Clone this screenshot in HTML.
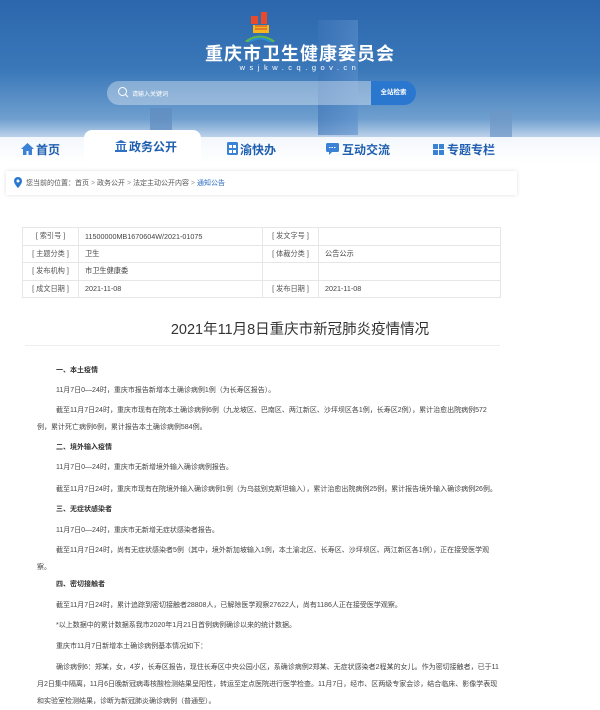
<!DOCTYPE html>
<html><head><meta charset="utf-8"><style>
*{margin:0;padding:0;box-sizing:border-box}
body{width:600px;height:704px;overflow:hidden;background:#fff;font-family:"Liberation Sans","Noto Sans CJK SC",sans-serif;position:relative}
.hdr{position:absolute;left:0;top:0;width:600px;height:140px;background:linear-gradient(180deg,#2c66ad 0%,#3a78b9 50%,#6f9fcf 85%,#c9daee 100%)}
.a{position:absolute}
.navbg{position:absolute;top:137px;left:0;width:600px;height:26px;background:linear-gradient(180deg,#f3f7fc,#fff)}
.nav{position:absolute;top:137px;left:0;width:600px;height:26px}
.nav div{position:absolute;top:4px;font-size:12px;font-weight:bold;color:#1f5fb0;white-space:nowrap}
.bc{position:absolute;left:6px;top:171px;width:511px;height:24px;background:#fff;box-shadow:0 0 4px rgba(0,0,0,.12);font-size:7px;color:#555;padding:7px 0 0 20px}
table{position:absolute;left:22px;top:227px;width:479px;border-collapse:collapse;font-size:7.2px;color:#444}
td{border:1px solid #e6e6e6;height:17.5px;padding-left:6px}
td.l{text-align:center;padding:0;color:#555}
.title{position:absolute;left:0;width:600px;top:318px;text-align:center;font-size:14.5px;color:#333}
.line{position:absolute;left:25px;top:345px;width:475px;height:1px;background:#eee}
.p{position:absolute;left:37px;width:462px;font-size:7px;color:#444;line-height:17px;text-indent:19px;white-space:normal}
.h{font-weight:bold;color:#333}
</style></head><body>
<div class="hdr"></div>
<div class="a" style="left:318px;top:20px;width:40px;height:115px;background:linear-gradient(90deg,#3d74b8,#5a8fcc);opacity:.6"></div>
<div class="a" style="left:150px;top:108px;width:22px;height:30px;background:#5f8bbf;opacity:.7"></div>
<div class="a" style="left:490px;top:110px;width:22px;height:28px;background:#6d97c6;opacity:.7"></div>
<svg class="a" style="left:243px;top:8px" width="34" height="34" viewBox="0 0 34 34"><path d="M8 8h7v8H8zM18 4h6v12h-6z" fill="#e94a2a"/><path d="M10 17h16v8H10z" fill="#f7b41c"/><path d="M12 18h12M12 21h12" stroke="#c43" stroke-width="1"/><path d="M3 34Q17 24 31 34" stroke="#5bb54a" stroke-width="3" fill="none"/><path d="M6 34Q17 27 28 34" stroke="#2a8fd6" stroke-width="2" fill="none"/></svg>
<div class="a" style="left:0;width:600px;top:45px;line-height:19px;text-align:center;font-size:18px;font-weight:bold;color:#fff;letter-spacing:1px">重庆市卫生健康委员会</div>
<div class="a" style="left:0;width:600px;top:64px;line-height:8px;text-align:center;font-size:7.5px;color:#fff;letter-spacing:4.5px">wsjkw.cq.gov.cn</div>
<div class="a" style="left:107px;top:81px;width:264px;height:24px;border-radius:12px 0 0 12px;background:rgba(255,255,255,.35)"></div>
<div class="a" style="left:371px;top:81px;width:45px;height:24px;border-radius:0 12px 12px 0;background:#2a77d0;color:#fff;font-size:6.5px;font-weight:bold;text-align:center;line-height:24px">全站检索</div>
<svg class="a" style="left:117px;top:86px" width="12" height="12"><circle cx="5.5" cy="5.5" r="4" stroke="#fff" stroke-width="1" fill="none"/><path d="M8.5 8.5L11 11" stroke="#fff"/></svg>
<div class="a" style="left:132px;top:89px;font-size:6px;color:#fff">请输入关键词</div>
<div class="navbg"></div>
<div class="a" style="left:84px;top:130px;width:117px;height:33px;background:#fff;border-radius:8px 8px 0 0"></div>
<div class="nav">
<svg class="a" style="left:21px;top:6px" width="13" height="12"><path d="M6.5 0L0 6h2v6h3.5V8h2v4H11V6h2z" fill="#3b82d6"/></svg>
<div style="left:36px">首页</div>
<svg class="a" style="left:115px;top:3px" width="12" height="12"><path d="M6 0L0 3h12zM1 4h10v1H1zM2 5h1.5v5H2zM5.2 5h1.5v5H5.2zM8.5 5H10v5H8.5zM0 10h12v2H0z" fill="#2f6fc4"/></svg>
<div style="left:129px;top:1px">政务公开</div>
<svg class="a" style="left:227px;top:5px" width="11" height="13"><rect width="11" height="13" rx="1.5" fill="#3b82d6"/><rect x="2" y="3" width="3" height="3" fill="#fff"/><rect x="6" y="3" width="3" height="3" fill="#fff"/><rect x="2" y="8" width="3" height="3" fill="#fff"/><rect x="6" y="8" width="3" height="3" fill="#fff"/></svg>
<div style="left:240px">渝快办</div>
<svg class="a" style="left:326px;top:6px" width="13" height="12"><rect width="13" height="9" rx="1.5" fill="#3b82d6"/><path d="M3 9l0 3 3-3z" fill="#3b82d6"/><path d="M3 4.5h7" stroke="#fff" stroke-dasharray="1.5 1"/></svg>
<div style="left:342px">互动交流</div>
<svg class="a" style="left:433px;top:7px" width="11" height="11"><rect width="5" height="5" fill="#3b82d6"/><rect x="6" width="5" height="5" fill="#3b82d6"/><rect y="6" width="5" height="5" fill="#3b82d6"/><rect x="6" y="6" width="5" height="5" fill="#3b82d6"/></svg>
<div style="left:447px">专题专栏</div>
</div>
<div class="bc"><svg class="a" style="left:8px;top:6px" width="8" height="12"><path d="M4 0A4 4 0 0 0 0 4c0 3 4 7 4 7s4-4 4-7a4 4 0 0 0-4-4z" fill="#2a77d0"/><circle cx="4" cy="4" r="1.5" fill="#fff"/></svg>您当前的位置：首页 <span style="color:#999">&gt;</span> 政务公开 <span style="color:#999">&gt;</span> 法定主动公开内容 <span style="color:#999">&gt;</span> <span style="color:#2a6bc0">通知公告</span></div>
<table>
<tr><td class="l" style="width:56px">[ 索引号 ]</td><td style="width:184px">11500000MB1670604W/2021-01075</td><td class="l" style="width:56px">[ 发文字号 ]</td><td></td></tr>
<tr><td class="l">[ 主题分类 ]</td><td>卫生</td><td class="l">[ 体裁分类 ]</td><td>公告公示</td></tr>
<tr><td class="l">[ 发布机构 ]</td><td>市卫生健康委</td><td></td><td></td></tr>
<tr><td class="l">[ 成文日期 ]</td><td>2021-11-08</td><td class="l">[ 发布日期 ]</td><td>2021-11-08</td></tr>
</table>
<div class="title">2021年11月8日重庆市新冠肺炎疫情情况</div>
<div class="line"></div>
<div class="p h" style="top:362px">一、本土疫情</div>
<div class="p" style="top:382px">11月7日0—24时，重庆市报告新增本土确诊病例1例（为长寿区报告）。</div>
<div class="p" style="top:402px">截至11月7日24时，重庆市现有在院本土确诊病例6例（九龙坡区、巴南区、两江新区、沙坪坝区各1例，长寿区2例），累计治愈出院病例572例，累计死亡病例6例，累计报告本土确诊病例584例。</div>
<div class="p h" style="top:439px">二、境外输入疫情</div>
<div class="p" style="top:459px">11月7日0—24时，重庆市无新增境外输入确诊病例报告。</div>
<div class="p" style="top:481px">截至11月7日24时，重庆市现有在院境外输入确诊病例1例（为乌兹别克斯坦输入），累计治愈出院病例25例，累计报告境外输入确诊病例26例。</div>
<div class="p h" style="top:501px">三、无症状感染者</div>
<div class="p" style="top:522px">11月7日0—24时，重庆市无新增无症状感染者报告。</div>
<div class="p" style="top:542px">截至11月7日24时，尚有无症状感染者5例（其中，境外新加坡输入1例，本土渝北区、长寿区、沙坪坝区、两江新区各1例），正在接受医学观察。</div>
<div class="p h" style="top:576px">四、密切接触者</div>
<div class="p" style="top:597px">截至11月7日24时，累计追踪到密切接触者28808人，已解除医学观察27622人，尚有1186人正在接受医学观察。</div>
<div class="p" style="top:617px">*以上数据中的累计数据系我市2020年1月21日首例病例确诊以来的统计数据。</div>
<div class="p" style="top:638px">重庆市11月7日新增本土确诊病例基本情况如下：</div>
<div class="p" style="top:659px">确诊病例6：郑某，女，4岁，长寿区报告，现住长寿区中央公园小区，系确诊病例2郑某、无症状感染者2程某的女儿。作为密切接触者，已于11月2日集中隔离，11月6日晚新冠病毒核酸检测结果呈阳性，转运至定点医院进行医学检查。11月7日，经市、区两级专家会诊，结合临床、影像学表现和实验室检测结果，诊断为新冠肺炎确诊病例（普通型）。</div>
</body></html>
